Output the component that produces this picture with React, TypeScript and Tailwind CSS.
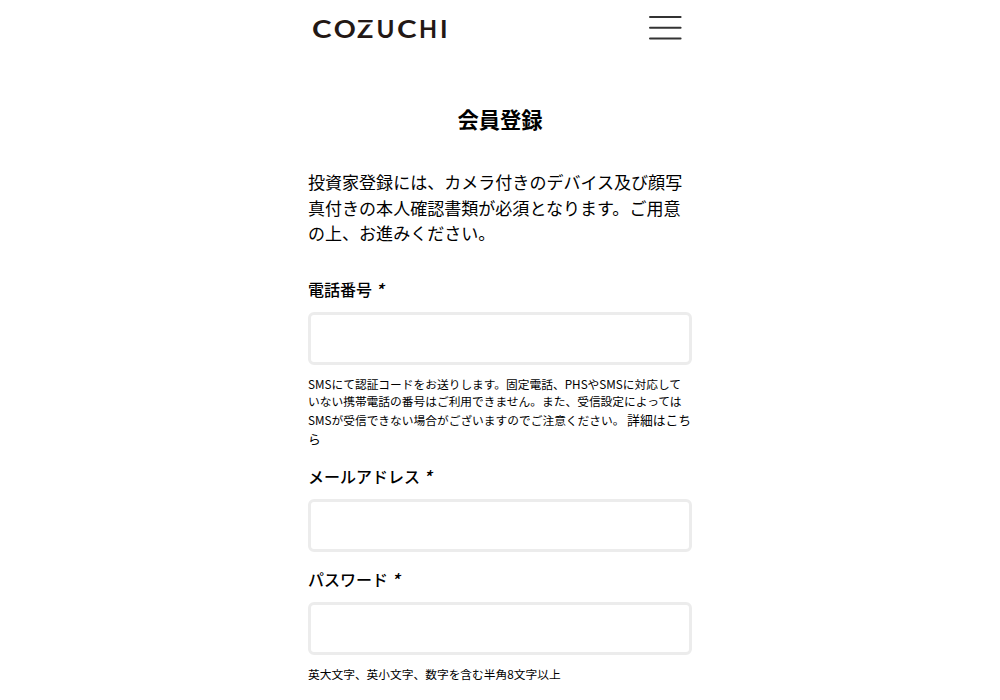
import type { ReactNode } from "react";

const FONT = "font-['Noto_Sans_CJK_JP','Noto_Sans',sans-serif]";

// wide C / O, narrow U / H
const LOGO_LETTERS = [
  { char: "C", x: 0.1, scale: 1.16 },
  { char: "O", x: 21.7, scale: 1.07 },
  { char: "Z", x: 44.9, scale: 1.06 },
  { char: "U", x: 64.5, scale: 0.95 },
  { char: "C", x: 84.9, scale: 1.16 },
  { char: "H", x: 107, scale: 0.92 },
  { char: "I", x: 127.9, scale: 1 },
];

function Logo() {
  return (
    <svg
      width="140"
      height="36"
      viewBox="0 0 140 36"
      className="block overflow-visible"
      aria-label="COZUCHI"
    >
      {LOGO_LETTERS.map(({ char, x, scale }) => (
        <text
          key={x}
          transform={`translate(${x} 27.5) scale(${scale} 1)`}
          fill="#231815"
          className="font-['Lato',sans-serif] text-[25.5px] font-bold"
        >
          {char}
        </text>
      ))}
      <path d="M44.5 13.4h17.5" stroke="#fff" strokeWidth="2" />
    </svg>
  );
}

function Header() {
  return (
    <header className="flex h-14 items-center justify-between pr-[10px] pl-1">
      <Logo />
      <button type="button" aria-label="menu">
        <svg width="33" height="26" viewBox="0 0 33 26" className="block">
          <path
            d="M1 2h30.6M1 12.7h30.6M1 23.5h30.6"
            stroke="#333"
            strokeWidth="2"
            strokeLinecap="round"
          />
        </svg>
      </button>
    </header>
  );
}

type FieldProps = {
  id: string;
  label: string;
  type: string;
  className?: string;
  children?: ReactNode;
};

function Field({ id, label, type, className = "", children }: FieldProps) {
  return (
    <div className={className}>
      <label htmlFor={id} className="block h-6 text-base leading-6 font-medium whitespace-nowrap">
        {label}
        <span className="ml-[3px] inline-block translate-y-px text-[17.5px] leading-none italic">*</span>
      </label>
      <input
        id={id}
        type={type}
        className="mt-[11px] block h-[53px] w-full rounded-md border-3 border-[#ececec] bg-white px-3 outline-none"
      />
      {children}
    </div>
  );
}

export default function App() {
  return (
    <div className={`h-[700px] overflow-hidden bg-white text-black ${FONT}`} lang="ja">
      <div className="mx-auto w-96">
        <Header />
        <main>
          <h1 className="mt-[47px] text-center text-[21.3px] leading-8 font-bold">会員登録</h1>
          <p className="mt-[34px] text-[17.05px] leading-[25.6px] whitespace-nowrap">
            投資家登録には、カメラ付きのデバイス及び顔写
            <br />
            真付きの本人確認書類が必須となります。ご用意
            <br />
            の上、お進みください。
          </p>
          <form>
            <Field id="tel" label="電話番号" type="tel" className="mt-[31px]">
              <p className="mt-[10px] text-[11.73px] leading-[17.6px] whitespace-nowrap">
                SMSにて認証コードをお送りします。固定電話、PHSやSMSに対応して
                <br />
                いない携帯電話の番号はご利用できません。また、受信設定によっては
              </p>
              <p className="text-[11.73px] leading-[19px] whitespace-nowrap">
                SMSが受信できない場合がございますのでご注意ください。{" "}
                <a className="text-[12.8px]">
                  詳細はこち
                  <br />ら
                </a>
              </p>
            </Field>
            <Field id="email" label="メールアドレス" type="email" className="mt-4" />
            <Field id="password" label="パスワード" type="password" className="mt-[15px]">
              <p className="mt-[10px] text-[11.73px] leading-[17.6px]">
                英大文字、英小文字、数字を含む半角8文字以上
              </p>
            </Field>
          </form>
        </main>
      </div>
    </div>
  );
}
